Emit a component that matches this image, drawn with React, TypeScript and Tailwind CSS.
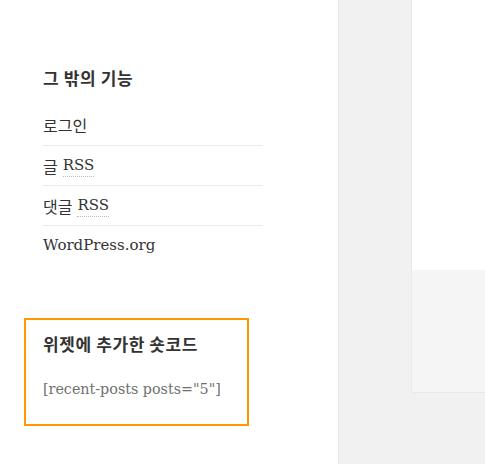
const serif = "font-['DejaVu_Serif','Noto_Sans_CJK_KR',serif]";

const links = [
  { ko: "로그인" },
  { ko: "글", rss: true },
  { ko: "댓글", rss: true },
  { en: "WordPress.org" },
];

export default function App() {
  return (
    <div className="flex h-[464px] w-[485px] overflow-hidden bg-[#f1f1f1]">
      {/* sidebar */}
      <aside className="w-[338px] shrink-0 bg-white shadow-[0_0_1px_rgba(0,0,0,0.25)]">
        <div className="pl-[43px] pt-[66px]">
          <section className="w-[220px]">
            <h2 className="h-6 text-[17px] font-bold leading-6 tracking-[0.6px] text-[#333] font-['Noto_Sans_CJK_KR',sans-serif]">
              그 밖의 기능
            </h2>
            <ul className={`mt-[15px] text-[15px] text-[#333] ${serif}`}>
              {links.map((l, i) => (
                <li
                  key={i}
                  className={
                    i === 0
                      ? "flex h-10 items-center"
                      : "flex h-10 items-center border-t border-[#eaeaea]"
                  }
                >
                  {l.en ? (
                    l.en
                  ) : (
                    <>
                      <span className="text-[16px] font-['Noto_Sans_CJK_KR',sans-serif]">{l.ko}</span>
                      {l.rss && (
                        <abbr className="ml-[5px] border-b border-dotted border-[#bbb] no-underline">RSS</abbr>
                      )}
                    </>
                  )}
                </li>
              ))}
            </ul>
          </section>
        </div>

        <section className="ml-6 mt-[53px] h-[108px] w-[225px] border-2 border-[#ff9800] pl-[17px] pt-[12px]">
          <h2 className="h-6 text-[17px] font-bold leading-6 tracking-[0.6px] text-[#333] font-['Noto_Sans_CJK_KR',sans-serif]">
            위젯에 추가한 숏코드
          </h2>
          <p className={`mt-[21px] h-6 text-[14.3px] leading-6 text-[#707070] ${serif}`}>
            [recent-posts posts="5"]
          </p>
        </section>
      </aside>

      {/* main */}
      <main className="ml-[74px] flex-1">
        <article className="shadow-[0_0_1px_rgba(0,0,0,0.2)]">
          <div className="h-[270px] bg-white" />
          <footer className="h-[122px] bg-[#f5f5f5]" />
        </article>
      </main>
    </div>
  );
}
